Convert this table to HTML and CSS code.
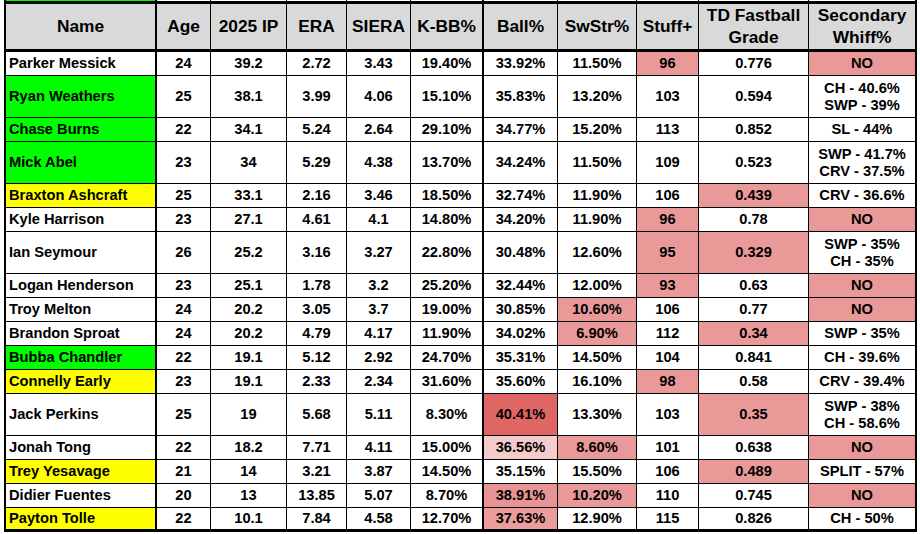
FILE: index.html
```html
<!DOCTYPE html>
<html lang="en">
<head>
<meta charset="utf-8">
<title>Pitcher table</title>
<link rel="stylesheet" href="styles.css">
</head>
<body>
<div class="page">
  <div class="row strip">
    <div class="c n green"></div><div class="c"></div><div class="c"></div><div class="c"></div><div class="c"></div><div class="c k"></div><div class="c"></div><div class="c"></div><div class="c"></div><div class="c"></div><div class="c s"></div>
  </div>
  <div class="sheet">
    <div class="row head">
      <div class="c n">Name</div><div class="c">Age</div><div class="c">2025 IP</div><div class="c">ERA</div><div class="c">SIERA</div><div class="c k">K-BB%</div><div class="c">Ball%</div><div class="c">SwStr%</div><div class="c">Stuff+</div><div class="c">TD Fastball<br>Grade</div><div class="c s">Secondary<br>Whiff%</div>
    </div>
    <div class="row">
      <div class="c n">Parker Messick</div><div class="c">24</div><div class="c">39.2</div><div class="c">2.72</div><div class="c">3.43</div><div class="c k">19.40%</div><div class="c">33.92%</div><div class="c">11.50%</div><div class="c bad">96</div><div class="c">0.776</div><div class="c s bad">NO</div>
    </div>
    <div class="row tall">
      <div class="c n green">Ryan Weathers</div><div class="c">25</div><div class="c">38.1</div><div class="c">3.99</div><div class="c">4.06</div><div class="c k">15.10%</div><div class="c">35.83%</div><div class="c">13.20%</div><div class="c">103</div><div class="c">0.594</div><div class="c s">CH - 40.6%<br>SWP - 39%</div>
    </div>
    <div class="row">
      <div class="c n green">Chase Burns</div><div class="c">22</div><div class="c">34.1</div><div class="c">5.24</div><div class="c">2.64</div><div class="c k">29.10%</div><div class="c">34.77%</div><div class="c">15.20%</div><div class="c">113</div><div class="c">0.852</div><div class="c s">SL - 44%</div>
    </div>
    <div class="row tall">
      <div class="c n green">Mick Abel</div><div class="c">23</div><div class="c">34</div><div class="c">5.29</div><div class="c">4.38</div><div class="c k">13.70%</div><div class="c">34.24%</div><div class="c">11.50%</div><div class="c">109</div><div class="c">0.523</div><div class="c s">SWP - 41.7%<br>CRV - 37.5%</div>
    </div>
    <div class="row">
      <div class="c n yellow">Braxton Ashcraft</div><div class="c">25</div><div class="c">33.1</div><div class="c">2.16</div><div class="c">3.46</div><div class="c k">18.50%</div><div class="c">32.74%</div><div class="c">11.90%</div><div class="c">106</div><div class="c bad">0.439</div><div class="c s">CRV - 36.6%</div>
    </div>
    <div class="row">
      <div class="c n">Kyle Harrison</div><div class="c">23</div><div class="c">27.1</div><div class="c">4.61</div><div class="c">4.1</div><div class="c k">14.80%</div><div class="c">34.20%</div><div class="c">11.90%</div><div class="c bad">96</div><div class="c">0.78</div><div class="c s bad">NO</div>
    </div>
    <div class="row tall">
      <div class="c n">Ian Seymour</div><div class="c">26</div><div class="c">25.2</div><div class="c">3.16</div><div class="c">3.27</div><div class="c k">22.80%</div><div class="c">30.48%</div><div class="c">12.60%</div><div class="c bad">95</div><div class="c bad">0.329</div><div class="c s">SWP - 35%<br>CH - 35%</div>
    </div>
    <div class="row">
      <div class="c n">Logan Henderson</div><div class="c">23</div><div class="c">25.1</div><div class="c">1.78</div><div class="c">3.2</div><div class="c k">25.20%</div><div class="c">32.44%</div><div class="c">12.00%</div><div class="c bad">93</div><div class="c">0.63</div><div class="c s bad">NO</div>
    </div>
    <div class="row">
      <div class="c n">Troy Melton</div><div class="c">24</div><div class="c">20.2</div><div class="c">3.05</div><div class="c">3.7</div><div class="c k">19.00%</div><div class="c">30.85%</div><div class="c bad">10.60%</div><div class="c">106</div><div class="c">0.77</div><div class="c s bad">NO</div>
    </div>
    <div class="row">
      <div class="c n">Brandon Sproat</div><div class="c">24</div><div class="c">20.2</div><div class="c">4.79</div><div class="c">4.17</div><div class="c k">11.90%</div><div class="c">34.02%</div><div class="c bad">6.90%</div><div class="c">112</div><div class="c bad">0.34</div><div class="c s">SWP - 35%</div>
    </div>
    <div class="row">
      <div class="c n green">Bubba Chandler</div><div class="c">22</div><div class="c">19.1</div><div class="c">5.12</div><div class="c">2.92</div><div class="c k">24.70%</div><div class="c">35.31%</div><div class="c">14.50%</div><div class="c">104</div><div class="c">0.841</div><div class="c s">CH - 39.6%</div>
    </div>
    <div class="row">
      <div class="c n yellow">Connelly Early</div><div class="c">23</div><div class="c">19.1</div><div class="c">2.33</div><div class="c">2.34</div><div class="c k">31.60%</div><div class="c">35.60%</div><div class="c">16.10%</div><div class="c bad">98</div><div class="c">0.58</div><div class="c s">CRV - 39.4%</div>
    </div>
    <div class="row tall">
      <div class="c n">Jack Perkins</div><div class="c">25</div><div class="c">19</div><div class="c">5.68</div><div class="c">5.11</div><div class="c k">8.30%</div><div class="c ball-4">40.41%</div><div class="c">13.30%</div><div class="c">103</div><div class="c bad">0.35</div><div class="c s">SWP - 38%<br>CH - 58.6%</div>
    </div>
    <div class="row">
      <div class="c n">Jonah Tong</div><div class="c">22</div><div class="c">18.2</div><div class="c">7.71</div><div class="c">4.11</div><div class="c k">15.00%</div><div class="c ball-1">36.56%</div><div class="c bad">8.60%</div><div class="c">101</div><div class="c">0.638</div><div class="c s bad">NO</div>
    </div>
    <div class="row">
      <div class="c n yellow">Trey Yesavage</div><div class="c">21</div><div class="c">14</div><div class="c">3.21</div><div class="c">3.87</div><div class="c k">14.50%</div><div class="c">35.15%</div><div class="c">15.50%</div><div class="c">106</div><div class="c bad">0.489</div><div class="c s">SPLIT - 57%</div>
    </div>
    <div class="row">
      <div class="c n">Didier Fuentes</div><div class="c">20</div><div class="c">13</div><div class="c">13.85</div><div class="c">5.07</div><div class="c k">8.70%</div><div class="c ball-3">38.91%</div><div class="c bad">10.20%</div><div class="c">110</div><div class="c">0.745</div><div class="c s bad">NO</div>
    </div>
    <div class="row last">
      <div class="c n yellow">Payton Tolle</div><div class="c">22</div><div class="c">10.1</div><div class="c">7.84</div><div class="c">4.58</div><div class="c k">12.70%</div><div class="c ball-2">37.63%</div><div class="c">12.90%</div><div class="c">115</div><div class="c">0.826</div><div class="c s">CH - 50%</div>
    </div>
  </div>
</div>
</body>
</html>
```

FILE: styles.css
```css
html, body {
  margin: 0;
  padding: 0;
  background: #ffffff;
}

body {
  font-family: "Liberation Sans", Arial, sans-serif;
  font-weight: bold;
  color: #000000;
}

.page {
  padding-left: 4px;
}

.sheet {
  width: 913px;
  box-sizing: border-box;
  border-top: 3px solid #000000;
  border-left: 2px solid #000000;
}

.row {
  display: grid;
  grid-template-columns: 151px 54px 76px 60px 64px 73px 74px 79px 62px 110px 108px;
  height: 24px;
  box-sizing: border-box;
  border-bottom: 1px solid #000000;
}

.row.strip {
  width: 913px;
  height: 1px;
  border-bottom: 0;
  border-left: 2px solid #000000;
  box-sizing: border-box;
}

.row.tall {
  height: 42px;
}

.row.head {
  height: 48px;
  border-bottom-width: 3px;
  background: #d9d9d9;
}

.row.last {
  border-bottom-width: 3px;
}

.c {
  display: flex;
  align-items: center;
  justify-content: center;
  text-align: center;
  box-sizing: border-box;
  border-right: 1px solid #000000;
  font-size: 14.67px;
  line-height: 17px;
  white-space: nowrap;
  overflow: hidden;
}

.c.n {
  justify-content: flex-start;
  text-align: left;
  padding-left: 3px;
  border-right-width: 2px;
}

.c.k,
.c.s {
  border-right-width: 2px;
}

.head .c {
  font-size: 17.33px;
  line-height: 21.5px;
}

.head .c.n {
  justify-content: center;
  text-align: center;
  padding-left: 0;
}

.green {
  background: #00ff00;
}

.yellow {
  background: #ffff00;
}

.bad {
  background: #ea9999;
}

.ball-1 {
  background: #f4cccc;
}

.ball-2 {
  background: #eb9d9d;
}

.ball-3 {
  background: #e99494;
}

.ball-4 {
  background: #e06666;
}
```
